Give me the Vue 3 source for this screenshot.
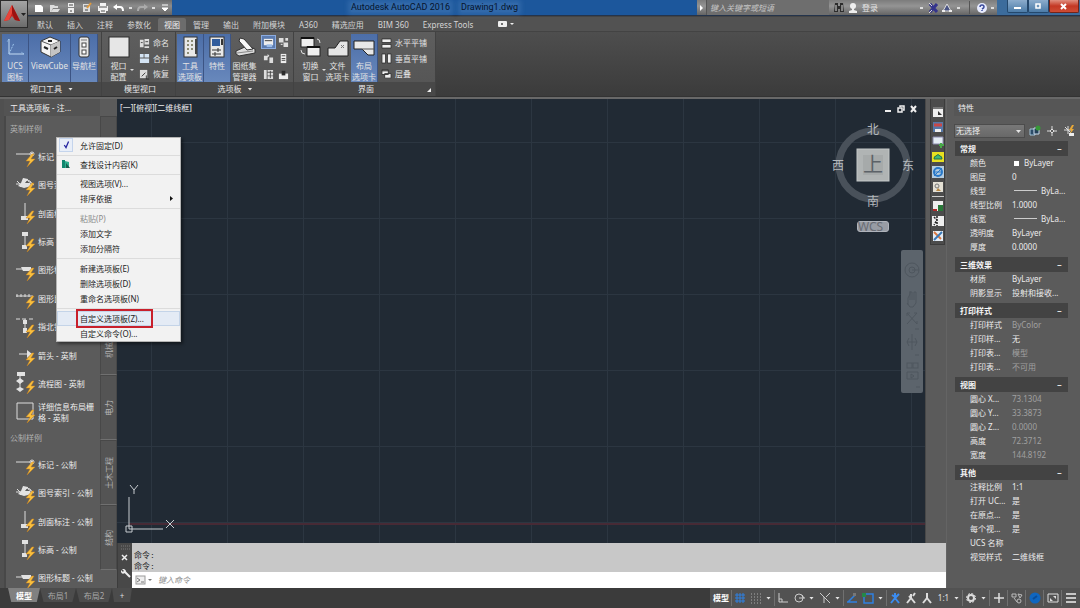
<script setup>
import { ref } from 'vue'

const tabs = ['默认', '插入', '注释', '参数化', '视图', '管理', '输出', '附加模块', 'A360', '精选应用', 'BIM 360', 'Express Tools']

const bolt = 'M16 10 L10 17 h4 l-3 6 l8 -8 h-4 l3 -5z'
const shapes = {
  mark: { line: 'M0 10 H14 M14 10 a2 2 0 1 0 4 0 a2 2 0 1 0 -4 0', fill: 'M15 9 h2 v2 h-2z' },
  index: { line: 'M0 11 h5 M1 8 l6 6 M4 14 l8 -8 M12 8 l6 4 M7 6 l7 2 3 4', fill: 'M7 5 l5 1 -3 4 5 0 2 3 -8 2 -6 -2 3 -3z' },
  section: { line: 'M9 2 V17', fill: 'M5 15 h7 v4 h-7z' },
  level: { line: 'M9 4 V18', fill: 'M6 3 h6 v4 h-6z M6 16 h5 v4 h-5z' },
  title: { line: 'M0 11 H17', fill: 'M5 9 h10 v4 h-8z' },
  scale: { line: 'M0 10 H17 M1 8 v3 M5 8 v3 M9 8 v3 M13 8 v3', fill: '' },
  north: { line: 'M0 4 h4 M6 4 h4 M13 4 h4 M9 4 V17', fill: 'M7 5 h4 v4 h-4z M7 13 h4 v5 h-4z' },
  arrow: { line: 'M3 11 H16', fill: 'M11 7 l5 4 -5 4z' },
  flow: { line: 'M4 3 V19', fill: 'M1 1 h8 v4 h-8z M0 10 l4 -3 4 3 -4 3z M0 18 l4 -2 4 2 -4 3z' },
  frame: { line: 'M1 3 h16 v16 h-16z', fill: '' }
}
const imperial = [
  ['mark', '标记 - 英制'], ['index', '图号索引 - 英制'], ['section', '剖面标注 - 英制'], ['level', '标高 - 英制'],
  ['title', '图形标题 - 英制'], ['scale', '图形比例 - 英制'], ['north', '指北针 - 英制'], ['arrow', '箭头 - 英制'],
  ['flow', '流程图 - 英制'], ['frame', '详细信息布局栅格 - 英制']
]
const metric = [
  ['mark', '标记 - 公制'], ['index', '图号索引 - 公制'], ['section', '剖面标注 - 公制'], ['level', '标高 - 公制'], ['title', '图形标题 - 公制']
]

const menu = [
  [{ t: '允许固定(D)', icon: 'check' }],
  [{ t: '查找设计内容(K)', icon: 'find' }],
  [{ t: '视图选项(V)...' }, { t: '排序依据', sub: true }],
  [{ t: '粘贴(P)', off: true }, { t: '添加文字' }, { t: '添加分隔符' }],
  [{ t: '新建选项板(E)' }, { t: '删除选项板(D)' }, { t: '重命名选项板(N)' }],
  [{ t: '自定义选项板(Z)...', hot: true }, { t: '自定义命令(O)...' }]
]

const sections = ref([
  { name: '常规', rows: [['颜色', 'ByLayer', 'swatch'], ['图层', '0'], ['线型', 'ByLa...', 'rule'], ['线型比例', '1.0000'], ['线宽', 'ByLa...', 'rule'], ['透明度', 'ByLayer'], ['厚度', '0.0000']] },
  { name: '三维效果', rows: [['材质', 'ByLayer'], ['阴影显示', '投射和接收...']] },
  { name: '打印样式', rows: [['打印样式', 'ByColor', 'off'], ['打印样...', '无'], ['打印表...', '模型', 'off'], ['打印表...', '不可用', 'off']] },
  { name: '视图', rows: [['圆心 X...', '73.1304', 'off'], ['圆心 Y...', '33.3873', 'off'], ['圆心 Z...', '0.0000', 'off'], ['高度', '72.3712', 'off'], ['宽度', '144.8192', 'off']] },
  { name: '其他', rows: [['注释比例', '1:1'], ['打开 UC...', '是'], ['在原点...', '是'], ['每个视...', '是'], ['UCS 名称', ''], ['视觉样式', '二维线框']] }
])
</script>

<template>
  <div class="app">
    <header class="head">
      <button class="logo" aria-label="应用程序菜单">
        <svg width="27" height="27" viewBox="0 0 27 27">
          <path d="M11 4 L3 20 L8 19 L11 15 L14 19 L19 20z" fill="#c8201c" />
          <path d="M11 4 L3 20 L8 19 L11 12z" fill="#e8453a" />
          <path d="M11 4 L19 20 L14 19 L11 12z" fill="#9c1210" />
          <path d="M20 12 h5 l-2.500 3z" fill="#222" />
        </svg>
      </button>
      <div class="head-main">
        <div class="titlebar">
          <div class="qat">
            <button aria-label="新建"><svg viewBox="0 0 12 12"><path d="M2 3 h6 l2 2 v5 h-8z" fill="#fff" /></svg></button>
            <button aria-label="打开"><svg viewBox="0 0 12 12"><path d="M1 3 h4 l1 1 h3 v2 h-5 l-2 4 h-1z M4 7 h7 l-2 3 h-7z" fill="#ddd" /></svg></button>
            <button aria-label="保存"><svg viewBox="0 0 12 12"><path d="M3 1 h6 v4 h-6z M3 6 h6 v5 h-6z" fill="#eee" /><path d="M4 3 h4 M5 9 h2" stroke="#444" /></svg></button>
            <button aria-label="另存为"><svg viewBox="0 0 12 12"><path d="M2 2 h7 v8 h-7z" fill="#ddd" /><path d="M3 4 h5 M4 8 h3" stroke="#444" /><path d="M6 6 l4 -5" stroke="#e09a3c" stroke-width="2" /></svg></button>
            <button aria-label="打印"><svg viewBox="0 0 12 12"><path d="M3 1 h6 v3 h2 v5 h-2 v2 h-6 v-2 h-2 v-5 h2z" fill="#f2f2f2" /><path d="M2 5 h8 M4 9 h4" stroke="#555" /></svg></button>
            <button aria-label="放弃"><svg viewBox="0 0 12 12"><path d="M2 5 h5 q3 0 3 4" fill="none" stroke="#fff" stroke-width="2" /><path d="M0 5 l4 -3 v6z" fill="#fff" /></svg></button>
            <i class="dot"></i>
            <button aria-label="重做"><svg viewBox="0 0 12 12"><path d="M10 5 h-5 q-3 0 -3 4" fill="none" stroke="#aaa" stroke-width="2" /><path d="M12 5 l-4 -3 v6z" fill="#aaa" /></svg></button>
            <i class="dot"></i>
            <button aria-label="自定义"><svg viewBox="0 0 12 12"><path d="M3 3 h6 M3 6 h6 l-3 3z" stroke="#fff" fill="#fff" /></svg></button>
          </div>
          <h1 class="title"><span>Autodesk AutoCAD 2016</span><span>Drawing1.dwg</span></h1>
          <div class="info">
            <button class="expand" aria-label="展开"><svg width="9" height="15" viewBox="0 0 9 15"><path d="M3 5 l3 3 l-3 3z" fill="#fff" /></svg></button>
            <input type="text" placeholder="键入关键字或短语" aria-label="键入关键字或短语" />
            <button aria-label="搜索"><svg width="12" height="12" viewBox="0 0 12 12"><path d="M2 1 h3 v3 h2 v-3 h3 l1 9 h-4 v-3 h-2 v3 h-4z" fill="#2c2c2c" /><path d="M3 3 v6 M9 3 v6" stroke="#ddd" /></svg></button>
            <button class="login"><svg width="10" height="12" viewBox="0 0 10 12"><circle cx="5" cy="4" r="3" fill="#eee" /><path d="M4 6 h2 v2 l3 1 v2 h-8 v-2 l3 -1z" fill="#eee" /></svg>登录</button>
            <i class="dot push"></i>
            <button aria-label="Exchange"><svg width="12" height="12" viewBox="0 0 12 12"><path d="M2 2 l7 8 M9 2 l-7 8" stroke="#34348c" stroke-width="3" /><path d="M1 1 l3 3 M1 11 l3 -3" stroke="#ddd" /></svg></button>
            <button aria-label="A360"><svg width="14" height="12" viewBox="0 0 14 12"><path d="M7 2 l4 7 h-8z" fill="#4a5484" stroke="#ddd" /><path d="M2 9 h3 M9 9 h3" stroke="#eee" stroke-width="2" /></svg></button>
            <i class="dot"></i>
            <i class="bar"></i>
            <button aria-label="帮助"><svg width="12" height="12" viewBox="0 0 12 12"><circle cx="6" cy="6" r="5" fill="#e8ecff" /><path d="M4 5 q0 -2 2 -2 t2 2 q0 1 -2 2 M6 8 v1" fill="none" stroke="#3c4c9c" stroke-width="1.500" /></svg></button>
            <i class="dot"></i>
          </div>
          <div class="winctl">
            <button aria-label="最小化"><svg width="10" height="10" viewBox="0 0 10 10"><path d="M2 6 h7 v2 h-7z" fill="#fff" /></svg></button>
            <button aria-label="还原"><svg width="10" height="10" viewBox="0 0 10 10"><path d="M3 3 h4 v4 h-4z" fill="none" stroke="#fff" stroke-width="1.500" /></svg></button>
            <button class="close" aria-label="关闭"><svg width="10" height="10" viewBox="0 0 10 10"><path d="M2 3 l5 5 M7 3 l-5 5" stroke="#fff" stroke-width="2" /></svg></button>
          </div>
        </div>
        <nav class="tabs">
          <button v-for="t in tabs" :key="t" :class="{ on: t === '视图' }">{{ t }}</button>
          <button class="cam" aria-label="显示选项"><svg width="18" height="8" viewBox="0 0 18 8"><rect x="1" y="1" width="9" height="6" rx="1" fill="#eee" /><circle cx="5" cy="4" r="1" fill="#444" /><path d="M13 3 h4 l-2 2z" fill="#eee" /></svg></button>
        </nav>
      </div>
    </header>

    <section class="ribbon">
      <div class="panel p1">
        <div class="tools">
          <button class="big on">
            <svg viewBox="0 0 24 24"><path d="M6 3 V18 H21" fill="none" stroke="#c4dcf4" /><path d="M6 18 L11 7 M6 3 l-2 3 M21 18 l-3 -2" stroke="#9cc4ec" stroke-dasharray="2 1" /></svg>
            <span>UCS<br />图标</span>
          </button>
          <button class="big wide on">
            <svg viewBox="0 0 24 24"><path d="M3 5 L12 1 L22 5 V16 L13 21 L3 16z" fill="#f4f4f4" stroke="#333" /><path d="M3 5 L13 9 L22 5 M13 9 V21" fill="none" stroke="#555" /><path d="M13 9 L22 5 V16 L13 21z" fill="#c4c4c4" /><path d="M6 11 l4 2 M10 5 h4 M16 13 l3 -2" stroke="#222" stroke-width="2" /></svg>
            <span>ViewCube</span>
          </button>
          <button class="big on">
            <svg viewBox="0 0 24 24"><rect x="7" y="1" width="10" height="20" rx="2" fill="#e8e8e8" stroke="#333" /><path d="M9 4 h6" stroke="#777" /><rect x="10" y="7" width="4" height="4" fill="#fff" stroke="#444" /><rect x="10" y="14" width="4" height="4" fill="#fff" stroke="#444" /></svg>
            <span>导航栏</span>
          </button>
        </div>
        <h2>视口工具 <i class="down"></i></h2>
      </div>
      <div class="panel p2">
        <div class="tools">
          <button class="big drop"><svg viewBox="0 0 24 24"><rect x="2" y="1" width="20" height="20" fill="#e6e6e6" stroke="#2c2c2c" /></svg><span>视口<br />配置</span></button>
          <div class="rows">
            <button><svg viewBox="0 0 12 12"><path d="M1 2 h4 v8 h-4z M6 1 h5 v6 h-5z M6 9 h5 v2 h-5z" fill="#ddd" /><path d="M7 4 h3 M2 5 h2" stroke="#444" /></svg>命名</button>
            <button><svg viewBox="0 0 12 12"><path d="M1 1 h4 v4 h-4z M6 1 h5 v4 h-5z M1 6 h10 v5 h-10z" fill="#d4e4f4" /></svg>合并</button>
            <button><svg viewBox="0 0 12 12"><path d="M1 1 h8 v9 h-8z" fill="#ddd" /><path d="M3 8 l4 -4 M8 7 v4 h3" stroke="#333" fill="none" /></svg>恢复</button>
          </div>
        </div>
        <h2>模型视口</h2>
      </div>
      <div class="panel p3">
        <div class="tools">
          <button class="big on"><svg viewBox="0 0 24 24"><rect x="6" y="1" width="13" height="20" fill="#e8e8e8" stroke="#333" /><path d="M9 5 h2 M9 9 h2 M9 13 h2 M9 17 h2 M13 5 h2 M13 9 h2 M13 13 h2" stroke="#8c8c74" stroke-width="2" /><path d="M17 3 h2 v15 h-2z" fill="#444" /></svg><span>工具<br />选项板</span></button>
          <button class="big on"><svg viewBox="0 0 24 24"><rect x="5" y="1" width="14" height="20" fill="#e8e8e8" stroke="#333" /><rect x="7" y="3" width="8" height="7" fill="#315c9c" /><path d="M7 14 h9 M7 18 h9 M13 12 v4 M10 16 v4" stroke="#333" /><path d="M17 3 v6" stroke="#333" stroke-width="2" /></svg><span>特性</span></button>
          <button class="big"><svg viewBox="0 0 24 24"><path d="M3 15 L14 10 L22 13 V17 L6 20 L3 18z" fill="#ddd" stroke="#333" /><path d="M7 2 l4 1 l9 10 l-6 1 l-8 -9z" fill="#f8f8f8" stroke="#333" /><path d="M4 17 l16 -2" stroke="#888" /></svg><span>图纸集<br />管理器</span></button>
          <div class="mini">
            <button class="on" aria-label="命令行"><svg viewBox="0 0 12 12"><path d="M1 2 h10 v7 h-10z" fill="#eee" /><path d="M2 4 h8" stroke="#333" /><path d="M4 8 h6 v3 h-6z" fill="#9cbce8" /></svg></button>
            <button aria-label="标记集"><svg viewBox="0 0 12 12"><path d="M1 1 h5 v5 h-5z M6 6 h5 v5 h-5z M8 1 h3 v3 h-3z" fill="#ddd" /><path d="M3 8 h2" stroke="#fff" /></svg></button>
            <button aria-label="图层"><svg viewBox="0 0 12 12"><path d="M1 3 h4 v5 h-4z M5 1 l2 2 -2 2z M7 5 h4 v6 h-4z" fill="#ddd" /></svg></button>
            <button aria-label="计算器"><svg viewBox="0 0 12 12"><path d="M3 1 h6 v10 h-6z" fill="#eee" /><path d="M4 3 h4 M4 6 h4 M4 8 h4" stroke="#444" /></svg></button>
            <button aria-label="设计中心"><svg viewBox="0 0 12 12"><path d="M1 1 h3 v10 h-3z M5 1 h6 v2 h-6z M5 4 h6 v3 h-6z M5 8 h6 v3 h-6z" fill="#ddd" /><path d="M8 2 v8" stroke="#444" /></svg></button>
            <button aria-label="外部参照"><svg viewBox="0 0 12 12"><path d="M1 5 h10 v6 h-10z" fill="#eee" /><path d="M4 2 h4 v5 h-4z" fill="#2c2c2c" /></svg></button>
          </div>
        </div>
        <h2>选项板 <i class="down"></i></h2>
      </div>
      <div class="panel p4">
        <div class="tools">
          <button class="big drop"><svg viewBox="0 0 24 24"><rect x="2" y="2" width="13" height="9" fill="#eee" stroke="#222" /><rect x="8" y="11" width="13" height="9" fill="#eee" stroke="#222" /><path d="M2 2 h13 M8 11 h13" stroke="#111" stroke-width="2" /><path d="M18 3 q3 0 3 4 M2 14 q0 4 4 4" fill="none" stroke="#ddd" /></svg><span>切换<br />窗口</span></button>
          <button class="big"><svg viewBox="0 0 24 24"><path d="M2 20 V12 H9 L14 5 H22 V20z" fill="#e4e4e4" stroke="#222" /><path d="M15 9 l3 3 m0 -3 l-3 3" stroke="#777" /></svg><span>文件<br />选项卡</span></button>
          <button class="big on"><svg viewBox="0 0 24 24"><path d="M2 5 H22 V19 H16 L10 13 H2z" fill="#e8e8e8" stroke="#222" /><path d="M10 13 H22" stroke="#555" /></svg><span>布局<br />选项卡</span></button>
          <div class="rows">
            <button><svg viewBox="0 0 12 12"><path d="M1 1 h10 v4 h-10z M1 7 h10 v4 h-10z" fill="#f0f0f0" stroke="#333" /></svg>水平平铺</button>
            <button><svg viewBox="0 0 12 12"><path d="M1 1 h4 v10 h-4z M7 1 h4 v10 h-4z" fill="#f0f0f0" stroke="#333" /></svg>垂直平铺</button>
            <button><svg viewBox="0 0 12 12"><path d="M1 1 h7 v5 h-7z M4 5 h7 v5 h-7z" fill="#f0f0f0" stroke="#333" /><path d="M1 2 h7" stroke="#222" /></svg>层叠</button>
          </div>
        </div>
        <h2>界面 <svg class="launch" width="5" height="5" viewBox="0 0 5 5"><path d="M4 0 v4 h-4z" fill="#eee" /></svg></h2>
      </div>
    </section>

    <main class="main">
      <aside class="palette">
        <h2>工具选项板 - 注...</h2>
        <div class="pal-body">
          <div class="items">
            <h3>英制样例</h3>
            <button v-for="i in imperial" :key="i[1]">
              <svg viewBox="0 0 20 24"><path :d="shapes[i[0]].line" fill="none" stroke="#ddd" /><path :d="shapes[i[0]].fill" fill="#e2e2e2" /><path :d="bolt" fill="#f8c040" stroke="#c8801c" stroke-width=".5" /></svg><span>{{ i[1] }}</span>
            </button>
            <h3>公制样例</h3>
            <button v-for="i in metric" :key="i[1]">
              <svg viewBox="0 0 20 24"><path :d="shapes[i[0]].line" fill="none" stroke="#ddd" /><path :d="shapes[i[0]].fill" fill="#e2e2e2" /><path :d="bolt" fill="#f8c040" stroke="#c8801c" stroke-width=".5" /></svg><span>{{ i[1] }}</span>
            </button>
          </div>
          <div class="side">
            <button class="first"><span>注释</span></button>
            <button class="part"><span>机械</span></button>
            <button><span>电力</span></button>
            <button><span>土木工程</span></button>
            <button><span>结构</span></button>
          </div>
        </div>
      </aside>

      <div class="center">
        <div class="work">
          <div class="canvas">
            <div class="xaxis"></div>
            <span class="vlabel">[一][俯视][二维线框]</span>
            <div class="vctl">
              <button aria-label="最小化视口"><svg width="8" height="8" viewBox="0 0 8 8"><path d="M1 5 h6 v2 h-6z" fill="#eee" /></svg></button>
              <button aria-label="还原视口"><svg width="8" height="8" viewBox="0 0 8 8"><path d="M3 2 v-1 h4 v4 h-1 M1 3 h4 v4 h-4z" fill="none" stroke="#eee" stroke-width="1.500" /></svg></button>
              <button aria-label="关闭视口"><svg width="8" height="8" viewBox="0 0 8 8"><path d="M1 1 l5 6 M6 1 l-5 6" stroke="#eee" stroke-width="2" /></svg></button>
            </div>
            <div class="cube">
              <svg width="80" height="80" viewBox="0 0 80 80"><circle cx="40" cy="40" r="34" fill="none" stroke="#49515a" stroke-width="7" /><rect x="24" y="24" width="32" height="32" fill="#b0b4b4" stroke="#c4c8c8" /><rect x="30" y="30" width="20" height="20" fill="#a6aaaa" /></svg>
              <span class="n">北</span><span class="s">南</span><span class="w">西</span><span class="e">东</span><span class="top">上</span>
              <button class="wcs">WCS</button>
            </div>
            <div class="navbar">
              <svg width="22" height="143" viewBox="0 0 22 143" fill="none" stroke="#4e565e">
                <circle cx="11" cy="20" r="7" /><circle cx="11" cy="20" r="3" /><path d="M11 20 h7" />
                <path d="M7 55 v-7 l2 -4 v-3 M9 50 v-8 h2 v8 M13 50 v-8 h2 v11 l-3 4 h-3 l-3 -4" />
                <path d="M6 63 l10 11 M16 63 l-10 11 M6 63 h3 M6 63 v3 M16 63 h-3 M16 74 v-3 M14 79 h4" />
                <path d="M11 84 v16 M6 92 h10 M8 88 l-2 4 2 4 M14 88 l2 4 -2 4 M14 105 h4" />
                <rect x="6" y="113" width="5" height="5" /><rect x="12" y="113" width="5" height="5" /><path d="M6 122 h11 v7 h-11z M10 124 v4 l3 -2z M15 137 h4" />
              </svg>
            </div>
            <svg class="ucs" width="56" height="56" viewBox="0 0 56 56" fill="none" stroke="#c8ccd0"><path d="M5 48 V16 M5 48 H39 M2 45 h6 v6 h-6z" /><path d="M6 4 l4 5 M14 4 l-4 5 v4 M42 39 l8 8 M50 39 l-8 8" /></svg>
          </div>
          <div class="strip">
            <div class="strip-in">
              <button aria-label="窗口"><svg viewBox="0 0 12 12"><path d="M1 2 h10 v9 h-10z" fill="#eee" /><path d="M1 2 h10" stroke="#777" stroke-width="2" /><path d="M6 5 l4 4 h-4z" fill="#333" /></svg></button>
              <button aria-label="保存视图"><svg viewBox="0 0 12 12"><path d="M1 1 h10 v10 h-10z" fill="#5678a8" /><path d="M2 4 h8" stroke="#c84848" stroke-width="3" /><path d="M3 8 h6 v3 h-6z" fill="#eee" /></svg></button>
              <button aria-label="屏幕"><svg viewBox="0 0 12 12"><path d="M1 1 h10 v7 h-10z" fill="#e4ecf4" stroke="#88a" /><path d="M7 9 h5 M9 7 v5" stroke="#48a848" stroke-width="2" /></svg></button>
              <button aria-label="云"><svg viewBox="0 0 12 12"><path d="M0 1 h12 v10 h-12z" fill="#e8e020" /><path d="M2 8 q0 -3 2 -3 q2 -3 4 0 q2 0 2 3z" fill="#3cb878" stroke="#247048" /></svg></button>
              <button aria-label="浏览器"><svg viewBox="0 0 12 12"><rect width="12" height="12" fill="#b4cce0" /><circle cx="6" cy="6" r="4" fill="none" stroke="#2878c8" stroke-width="2" /><path d="M3 6 h7 M2 10 l8 -8" stroke="#2878c8" /></svg></button>
              <button aria-label="查找"><svg viewBox="0 0 12 12"><path d="M1 1 h10 v10 h-10z" fill="#e4e0d4" /><circle cx="5" cy="5" r="2" stroke="#777" fill="none" /><path d="M6 7 l3 3 h-5z" fill="#b88844" /></svg></button>
              <i></i>
              <button aria-label="块"><svg viewBox="0 0 12 12"><path d="M1 1 h10 v10 h-10z" fill="#eee" /><path d="M6 5 h5 v6 h-5z" fill="#287838" /><path d="M1 9 h4 v2 h-4z" fill="#b02828" /></svg></button>
              <button aria-label="镜像"><svg viewBox="0 0 12 12"><path d="M0 1 h12 v10 h-12z" fill="#eee" /><path d="M2 2 l3 3 -3 5 M5 1 v10" stroke="#222" fill="none" stroke-width="1.500" stroke-dasharray="2 1" /></svg></button>
              <button aria-label="修剪"><svg viewBox="0 0 12 12"><path d="M1 1 h10 v10 h-10z" fill="#e4ecf4" /><path d="M2 2 l7 7" stroke="#d87840" stroke-width="2" /><path d="M10 2 l-8 8" stroke="#3878b8" stroke-width="2" /></svg></button>
            </div>
          </div>
        </div>
        <section class="cmd">
          <div class="grip">
            <svg width="14" height="45" viewBox="0 0 14 45"><path d="M3 3 h9 M3 6 h9" stroke="#777" stroke-dasharray="1 1" /><path d="M4 12 l5 5 M9 12 l-5 5" stroke="#eee" stroke-width="1.500" /><path d="M6 28 l6 6" stroke="#eee" stroke-width="2" /><path d="M3 27 v2 q1 3 4 1 q2 -3 -1 -4 h-2 l2 2 -1 1z" fill="#eee" /></svg>
          </div>
          <div class="cmd-body">
            <p>命令:<br />命令:</p>
            <label class="entry"><svg width="22" height="12" viewBox="0 0 22 12"><rect x="4" y="2" width="9" height="8" fill="#eee" stroke="#999" /><path d="M5 4 l3 2 -3 2 M9 8 h3" stroke="#777" fill="none" /><path d="M16 5 h4 l-2 2z" fill="#777" /></svg><input type="text" placeholder="键入命令" aria-label="键入命令" /></label>
          </div>
        </section>
      </div>

      <aside class="props">
        <h2>特性</h2>
        <div class="pick">
          <label><select aria-label="选择对象"><option>无选择</option></select><i class="down"></i></label>
          <button aria-label="切换 PICKADD"><svg width="12" height="12" viewBox="0 0 12 12"><path d="M1 4 h5 v6 h-5z" fill="#2c4c68" stroke="#a4c4d8" /><path d="M5 3 h5 v6 h-5z" fill="#244058" stroke="#cde" /><circle cx="9" cy="3" r="2.500" fill="#389838" /></svg></button>
          <button aria-label="选择对象"><svg width="12" height="12" viewBox="0 0 12 12"><path d="M6 1 v3 M6 8 v3 M1 6 h3 M8 6 h3" stroke="#ddd" /><path d="M6 4 l2 2 -2 2 -2 -2z" fill="none" stroke="#ddd" /></svg></button>
          <button aria-label="快速选择"><svg width="12" height="12" viewBox="0 0 12 12"><path d="M5 1 v8 M1 5 h8 M2 2 l6 6" stroke="#ddd" /><path d="M9 0 l-3 5 h2 l-1 4 4 -5 h-2 l2 -4z" fill="#e8a838" /><path d="M6 8 h5 v3 h-5z" fill="#eee" /></svg></button>
        </div>
        <div class="groups">
          <section v-for="s in sections" :key="s.name">
            <button class="gh"><span>{{ s.name }}</span><span>−</span></button>
            <table>
              <tbody>
                <tr v-for="(r, k) in s.rows" :key="k">
                  <th scope="row">{{ r[0] }}</th>
                  <td :class="{ off: r[2] === 'off' }"><i v-if="r[2] === 'swatch'" class="sw"></i><i v-if="r[2] === 'rule'" class="ln"></i>{{ r[1] }}</td>
                </tr>
              </tbody>
            </table>
          </section>
        </div>
      </aside>
    </main>

    <footer class="status">
      <nav class="layouts">
        <button class="on">模型</button><button>布局1</button><button>布局2</button><button class="plus">+</button>
      </nav>
      <div class="sicons">
        <button class="model">模型</button>
        <button class="b" aria-label="栅格"><svg viewBox="0 0 12 12"><path d="M3 1 v10 M6 1 v10 M9 1 v10 M1 3 h10 M1 6 h10 M1 9 h10" stroke="#2f80e0" /></svg></button>
        <button aria-label="捕捉"><svg viewBox="0 0 12 12"><path d="M1 2 h10 M1 5 h10 M1 8 h10 M1 11 h10" stroke="#aaa" stroke-dasharray="1 2" /></svg></button>
        <i class="down"></i>
        <button class="b" aria-label="正交"><svg viewBox="0 0 12 12"><path d="M2 1 v9 h9 M2 7 h3 v3" fill="none" stroke="#ccc" /></svg></button>
        <button aria-label="极轴"><svg viewBox="0 0 12 12"><circle cx="6" cy="6" r="4" fill="none" stroke="#ccc" /><path d="M6 6 h6 M9 3 l2 3" stroke="#ccc" /></svg></button>
        <i class="down"></i>
        <button aria-label="等轴测"><svg viewBox="0 0 12 12"><path d="M1 1 l10 10 M7 5 l4 -4 M5 5 v6" stroke="#ccc" /></svg></button>
        <i class="down"></i>
        <button class="b" aria-label="追踪"><svg viewBox="0 0 12 12"><path d="M1 10 h10 M2 10 l7 -7" stroke="#2f80e0" stroke-width="1.500" /><path d="M7 1 h3 v3 h-3z" fill="#777" /></svg></button>
        <button aria-label="对象捕捉"><svg viewBox="0 0 12 12"><path d="M2 2 h9 v9 h-9z" fill="none" stroke="#2f80e0" stroke-width="1.500" /><path d="M0 1 h4 v4 h-4z" fill="#258848" /></svg></button>
        <i class="down"></i>
        <button class="b" aria-label="注释可见性"><svg viewBox="0 0 12 12"><path d="M6 1 v5 l-4 5 M6 6 l4 5 M3 3 l3 2 M10 2 l-4 4" fill="none" stroke="#3b8cf0" stroke-width="2" /></svg></button>
        <button aria-label="自动缩放"><svg viewBox="0 0 12 12"><path d="M6 2 v4 l-4 5 M6 6 l4 5 M4 4 l2 2 M10 1 l-2 3" fill="none" stroke="#ddd" stroke-width="2" /></svg></button>
        <button aria-label="注释比例图标"><svg viewBox="0 0 12 12"><path d="M6 1 v5 l-4 5 M6 6 l4 5" fill="none" stroke="#ddd" stroke-width="2" /></svg></button>
        <button class="ratio">1:1</button>
        <i class="down"></i>
        <button class="b" aria-label="设置"><svg viewBox="0 0 12 12"><circle cx="6" cy="6" r="3" fill="none" stroke="#ddd" stroke-width="2" /><circle cx="6" cy="6" r="4.500" fill="none" stroke="#ddd" stroke-dasharray="2 1.500" /></svg></button>
        <i class="down"></i>
        <button class="b gap" aria-label="注释监视器"><svg viewBox="0 0 12 12"><path d="M6 1 v10 M1 6 h10" stroke="#ddd" stroke-width="1.500" /></svg></button>
        <button class="b gap" aria-label="隔离对象"><svg viewBox="0 0 12 12"><path d="M1 2 h4 v3 h-4z M7 2 l4 1 -2 3z M3 6 l3 4" fill="none" stroke="#bbb" /><circle cx="8" cy="9" r="2" fill="none" stroke="#bbb" /></svg></button>
        <button class="b gap" aria-label="硬件加速"><svg viewBox="0 0 12 12"><circle cx="6" cy="6" r="5.500" fill="#0f66c0" /><path d="M4 7 l4 -3" stroke="#0a4c98" stroke-width="2" /></svg></button>
        <button class="b gap" aria-label="全屏"><svg viewBox="0 0 12 12"><path d="M1 2 h10 v8 h-10z" fill="none" stroke="#ddd" /><path d="M6 4 h3 v3z M3 9 v-3 l3 3z" fill="#ddd" /></svg></button>
        <button class="b gap" aria-label="自定义"><svg viewBox="0 0 12 12"><path d="M1 2 h10 M1 6 h10 M1 10 h10" stroke="#eee" stroke-width="1.500" /></svg></button>
      </div>
    </footer>

    <div class="menu" role="menu">
      <div v-for="(g, n) in menu" :key="n" class="mg">
        <button v-for="m in g" :key="m.t" role="menuitem" :class="{ off: m.off, hot: m.hot }">
          <svg v-if="m.icon === 'check'" class="mi ck" width="14" height="14" viewBox="0 0 14 14"><path d="M5 7 l2 3 l3 -7" fill="none" stroke="#2424a0" stroke-width="1.500" /></svg>
          <svg v-if="m.icon === 'find'" class="mi" width="14" height="14" viewBox="0 0 14 14"><path d="M3 3 h3 v8 h-3z" fill="#108870" /><path d="M6 4 l4 1 v6 h-4z" fill="#30b090" /><path d="M7 6 l4 5 h-4z" fill="#186050" /></svg>
          <span>{{ m.t }}</span>
          <svg v-if="m.sub" class="sub" width="5" height="7" viewBox="0 0 5 7"><path d="M1 1 l3 2.500 l-3 2.500z" fill="#111" /></svg>
        </button>
      </div>
    </div>
  </div>
</template>

<style>
body { margin: 0; background: #3b3b3b; }
</style>

<style scoped>
.app { position: relative; min-height: 100vh; display: flex; flex-direction: column; background: #3b3b3b; color: #e4e4e4; font: 8px/12px "Noto Sans", "Noto Sans CJK SC", sans-serif; overflow: hidden; }
.app *, .app *::after { box-sizing: border-box; }
button { border: 0; padding: 0; margin: 0; background: none; color: inherit; font: inherit; }
svg { display: block; flex: none; }
h1, h2, h3, p { margin: 0; font: inherit; }
input, select { font: inherit; border: 0; padding: 0; margin: 0; min-width: 0; border-radius: 0; }

.head { display: flex; height: 31px; background: #515151; }
.logo { width: 28px; height: 28px; background: linear-gradient(#a4a4a4, #6c6c6c); border: 1px solid #2c2c2c; overflow: hidden; }
.head-main { flex: 1; min-width: 0; }
.titlebar { display: flex; height: 16px; background: #1c579c; border-bottom: 1px solid #24344c; }
.qat { width: 144px; display: flex; align-items: center; padding-left: 5px; gap: 4px; background: linear-gradient(#6c6c6c, #8c8c8c 40%, #646464); }
.qat svg { width: 12px; height: 12px; }
.dot { width: 3px; height: 2px; background: #ddd; flex: none; }
.title { flex: 1; display: flex; justify-content: center; align-items: center; gap: 11px; font-family: Roboto, sans-serif; font-size: 9px; color: #06142c; white-space: nowrap; }
.title span { background: rgb(110 160 210 / 25%); box-shadow: 0 0 5px 3px rgb(110 160 210 / 25%); line-height: 9px; }
.info { display: flex; align-items: center; width: 300px; background: linear-gradient(#7c7c7c, #949494 40%, #646464); }
.expand { border-right: 1px solid #555; }
.info input { width: 122px; height: 15px; background: #6e6e6e; color: #ddd; font-style: italic; padding-left: 3px; margin-right: 4px; }
.info input::placeholder { color: #c4c4c4; opacity: 1; }
.info .login { display: flex; align-items: center; gap: 4px; margin-left: 3px; }
.info .bar { width: 1px; height: 13px; background: #555; margin: 0 6px; }
.info .dot { margin: 0 3px; }
.info .push { margin-left: auto; margin-right: 5px; }
.winctl { display: flex; width: 83px; padding: 0 1px 2px 10px; background: #3c6c9c; }
.winctl button { display: flex; justify-content: center; align-items: center; background: linear-gradient(#8caccc, #4c7ca8); border: 1px solid #24486c; border-top: 0; border-radius: 0 0 2px 2px; flex: 2; }
.winctl .close { flex: 3; background: linear-gradient(#e09080, #c43824 50%, #cc4c34); border-color: #742418; }
.tabs { display: flex; height: 15px; padding-left: 2px; align-items: stretch; background: #525252; border-top: 1px solid #444; }
.tabs button { padding: 0 7px; line-height: 13px; color: #d4d4d4; white-space: nowrap; }
.tabs .on { background: #6c6c6c; color: #eee; padding: 0 6px; margin-top: 1px; border-radius: 2px 2px 0 0; }
.tabs .cam { padding-left: 17px; }

.ribbon { display: flex; height: 66px; background: linear-gradient(#4e4e4e, #3b3b3b); border-top: 1px solid #434343; border-bottom: 1px solid #333; }
.panel { display: flex; flex-direction: column; padding-top: 2px; background: linear-gradient(#5e5e5e, #565656 50px, #484848 50px); border-right: 1px solid #424242; }
.tools { display: flex; height: 48px; }
.panel h2 { position: relative; flex: 1; display: flex; justify-content: center; align-items: center; gap: 6px; color: #e8e8e8; }
.p1 { width: 102px; padding-left: 2px; }
.p2 { width: 74px; padding-left: 3px; }
.p3 { width: 118px; padding-left: 1px; }
.p4 { width: 142px; padding-left: 3px; }
.big { position: relative; width: 27px; padding-top: 2px; display: flex; flex-direction: column; align-items: center; line-height: 11px; white-space: nowrap; color: #e4e4e4; }
.big svg { width: 24px; height: 24px; }
.big.on { background: linear-gradient(#4c6ea8, #6888bc); border-right: 1px solid #3c5484; }
.big.wide { width: 42px; }
.drop::after { content: ""; position: absolute; right: -2px; bottom: 9px; border: 2px solid transparent; border-top-color: #ddd; }
.down { display: inline-block; width: 5px; height: 3px; background: #e4e4e4; clip-path: polygon(0 0, 100% 0, 50% 100%); flex: none; }
.rows { display: flex; flex-direction: column; justify-content: space-between; padding: 2px 0 1px 3px; }
.rows button { display: flex; align-items: center; gap: 3px; height: 14px; white-space: nowrap; }
.rows svg { width: 11px; height: 11px; }
.p2 .rows { padding-left: 7px; }
.mini { display: grid; grid-template-columns: 15px 15px; grid-template-rows: 16px 16px 16px; padding-left: 3px; align-items: center; }
.mini button { display: flex; justify-content: center; align-items: center; height: 14px; }
.mini svg { width: 11px; height: 11px; }
.mini .on { background: #5c7cb0; border: 1px solid #8cace0; }
.launch { position: absolute; right: 3px; bottom: 3px; }

.main { flex: 1; display: grid; grid-template-columns: 117px minmax(0, 1fr) 134px; border-top: 2px solid #686868; }
.palette { display: flex; flex-direction: column; background: #5b5b5b; border-left: 4px solid #505050; min-height: 0; overflow: hidden; }
.palette > h2 { height: 17px; line-height: 17px; width: 96px; padding-left: 6px; background: #535353; color: #eee; }
.pal-body { flex: 1; display: flex; margin-bottom: -4px; border-left: 2px solid #484848; min-height: 0; }
.items { flex: 1; display: flex; flex-direction: column; min-width: 0; }
.items h3 { height: 24px; line-height: 24px; padding-left: 4px; color: #b0b0b0; }
.items h3:first-child { height: 26px; line-height: 26px; }
.items button { flex: 1; display: flex; align-items: center; gap: 2px; padding-left: 10px; text-align: left; line-height: 11px; color: #eee; }
.items svg { width: 20px; height: 24px; }
.items span { max-width: 60px; }
.side { width: 17px; display: flex; flex-direction: column; padding-bottom: 22px; }
.side button { height: 65px; display: flex; align-items: center; justify-content: center; border: 1px solid #484848; border-bottom-color: #707070; background: #545454; color: #b4b4b4; }
.side .first { flex: 1; }
.side .part { padding-top: 14px; }
.side span { writing-mode: vertical-rl; text-orientation: sideways; transform: rotate(180deg); white-space: nowrap; }

.center { display: flex; flex-direction: column; min-width: 0; }
.work { flex: 1; display: flex; }
.canvas { position: relative; flex: 1; background-color: #212a34; background-image: linear-gradient(90deg, #2c3641 1px, transparent 1px), linear-gradient(#2c3641 1px, transparent 1px); background-size: 76px 76px; background-position: 34px 0, 0 43px; }
.xaxis { position: absolute; left: 12px; right: 0; bottom: 18px; height: 2px; background: #472a35; }
.vlabel { position: absolute; left: 3px; top: 3px; color: #eee; }
.vctl { position: absolute; right: 7px; top: 6px; display: flex; gap: 5px; }
.cube { position: absolute; right: 12px; top: 26px; width: 80px; height: 110px; color: #b4b8bc; font-size: 12px; line-height: 14px; text-align: center; }
.cube span { position: absolute; }
.cube .n { left: 34px; top: -2px; }
.cube .s { left: 34px; top: 70px; }
.cube .w { left: -1px; top: 34px; }
.cube .e { left: 69px; top: 34px; }
.cube .top { left: 30px; top: 28px; font-size: 20px; line-height: 24px; color: #5c6268; }
.wcs { position: absolute; left: 24px; top: 96px; width: 32px; height: 11px; padding-right: 6px; line-height: 9px; border-radius: 3px; background: #989ca4; border: 1px solid #b0b4bc; color: #686c74; }
.navbar { position: absolute; right: 2px; top: 151px; background: #5c646c; border-radius: 2px; }
.ucs { position: absolute; left: 7px; bottom: 6px; }
.strip { width: 21px; background: #5b5b5b; padding-left: 4px; border-left: 1px solid #484848; }
.strip-in { display: flex; flex-direction: column; align-items: center; gap: 3px; width: 15px; padding: 7px 0 2px; background: #4c4c4c; border: 1px solid #3c3c3c; border-top: 0; }
.strip svg { width: 12px; height: 12px; }
.strip i { width: 12px; height: 1px; background: #ccc; }
.cmd { display: flex; height: 45px; border-left: 1px solid #3c3c3c; }
.grip { background: #484848; width: 14px; }
.cmd-body { flex: 1; display: flex; flex-direction: column; background: #c8c8c8; color: #222; }
.cmd-body p { flex: 1; padding: 7px 0 0 2px; line-height: 11px; font-family: "Liberation Mono", "Noto Sans CJK SC", monospace; }
.entry { display: flex; align-items: center; height: 16px; background: #fff; }
.entry input { flex: 1; background: none; margin-left: 4px; font-style: italic; }
.entry input::placeholder { color: #909090; opacity: 1; }

.props { background: #5b5b5b; border-left: 1px solid #646464; padding-left: 7px; }
.props > h2 { height: 17px; line-height: 17px; padding-left: 4px; background: #565656; color: #eee; }
.pick { display: flex; align-items: center; height: 25px; padding-top: 5px; gap: 5px; }
.pick label { position: relative; display: flex; width: 71px; margin-right: -1px; }
.pick select { appearance: none; width: 100%; height: 14px; padding: 0 0 0 1px; background: linear-gradient(#787878, #686868); border: 1px solid #4c4c4c; color: #eee; }
.pick .down { position: absolute; right: 4px; top: 6px; }
.groups { padding: 0 12px 0 1px; }
.groups section { margin-bottom: 3px; }
.gh { display: flex; justify-content: space-between; align-items: center; width: 100%; height: 15px; padding: 0 5px; background: #434343; font-weight: bold; color: #f4f4f4; }
.gh span:last-child { padding-right: 1px; }
table { width: 100%; border-spacing: 0; table-layout: fixed; }
tr { height: 14px; }
th { width: 56px; padding: 0 0 0 15px; font-weight: normal; text-align: left; white-space: nowrap; color: #ececec; }
td { height: 14px; padding: 0 0 0 1px; white-space: nowrap; color: #ececec; }
td.off { color: #a0a0a0; }
.sw { display: inline-block; width: 5px; height: 5px; margin: 0 5px 0 2px; background: #fff; }
.ln { display: inline-block; width: 23px; height: 1px; margin: 0 4px 3px 2px; background: #ccc; }

.status { display: flex; justify-content: space-between; height: 20px; background: #3b3b3b; }
.layouts { display: flex; height: 14px; padding-left: 8px; }
.layouts button { width: 36px; padding: 0 4px; line-height: 13px; background: #4c4c4c; color: #a8a8a8; clip-path: polygon(0 0, 100% 0, 90% 100%, 10% 100%); white-space: nowrap; }
.layouts .on { background: #808080; color: #fff; font-weight: bold; width: 32px; }
.layouts .plus { width: 20px; color: #ddd; }
.sicons { display: flex; align-items: center; background: #525252; padding: 0 1px; }
.sicons button { height: 16px; display: flex; align-items: center; justify-content: center; width: 16px; }
.sicons .b { width: 17px; border-left: 1px solid #707070; }
.sicons svg { width: 12px; height: 12px; }
.sicons .down { margin: 0 3px 0 2px; }
.sicons .model { width: 20px; font-weight: bold; color: #fff; }
.sicons .ratio { width: 17px; }
.sicons .gap { width: 18px; }

.menu { position: absolute; left: 56px; top: 137px; width: 125px; background: #f2f2f2; border: 1px solid #b4b4b4; box-shadow: 2px 2px 3px rgb(0 0 0 / 45%); color: #1c1c1c; }
.mg + .mg { margin-top: 2px; padding-top: 2px; border-top: 1px solid #dcdcdc; }
.mg:nth-child(2), .mg:nth-child(3) { padding-top: 1px; }
.mg button { position: relative; display: flex; align-items: center; width: 100%; height: 15px; padding-left: 23px; }
.mi { position: absolute; left: 2px; top: 0; }
.ck { background: #e8eef8; border: 1px solid #c4d4ec; }
.sub { position: absolute; right: 6px; top: 4px; }
.mg .off { color: #8c8c8c; }
.mg .hot { background: #e4ebf5; box-shadow: inset 0 0 0 1px #c4d4e8; }
.hot::after { content: ""; position: absolute; left: 19px; top: -2px; width: 77px; height: 19px; border: 2px solid #c8202c; }
</style>
